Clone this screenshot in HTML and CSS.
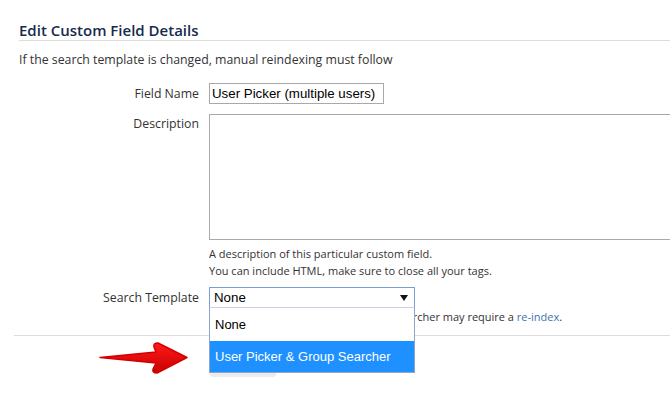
FILE: index.html
```html
<!DOCTYPE html>
<html>
<head>
<meta charset="utf-8">
<link rel="stylesheet" href="styles.css">
</head>
<body>
<div class="page">
  <h2 class="title">Edit Custom Field Details</h2>
  <p class="intro">If the search template is changed, manual reindexing must follow</p>
  <div class="row row-name">
    <label class="label">Field Name</label>
    <div class="field"><div class="input">User Picker (multiple users)</div></div>
  </div>
  <div class="row row-desc">
    <label class="label">Description</label>
    <div class="field">
      <div class="textarea"></div>
      <div class="help">A description of this particular custom field.<br>You can include HTML, make sure to close all your tags.</div>
    </div>
  </div>
  <div class="row row-search">
    <label class="label">Search Template</label>
    <div class="field">
      <div class="select-wrap">
        <div class="select"><span>None</span><svg class="caret" width="8" height="6" viewBox="0 0 8 6"><path d="M0 0H8L4 6Z" fill="#111"/></svg></div>
        <div class="dropdown">
          <div class="opt">None</div>
          <div class="opt opt-active">User Picker &amp; Group Searcher</div>
        </div>
      </div>
      <div class="help">Note that changing the custom field searcher may require a <a href="#">re-index</a>.</div>
    </div>
  </div>
  <div class="sep"></div>
  <div class="buttons"><div class="btn">Update</div></div>
  <svg class="arrow" width="96" height="40" viewBox="0 0 96 40">
    <defs>
      <linearGradient id="g" x1="0" y1="0" x2="0" y2="1">
        <stop offset="0" stop-color="#ff1a1a"/>
        <stop offset="1" stop-color="#c80000"/>
      </linearGradient>
    </defs>
    <path d="M2 19.5 L58 14 L56 9 Q55 5 60 5 L89 19.5 L59 35 Q54 35 55 31 L58 25 Z" fill="url(#g)" stroke="#d40000" stroke-width="1.5" stroke-linejoin="round"/>
  </svg>
</div>
</body>
</html>
```
FILE: styles.css
```css
html, body {
  margin: 0;
  padding: 0;
  background: #fff;
}
body {
  font-family: "Open Sans", "Noto Sans", sans-serif;
  color: #333;
  font-size: 12.3px;
  overflow: hidden;
}
.page {
  position: relative;
  padding: 20px 0 0 19px;
}
.title {
  margin: 0;
  font-size: 15px;
  line-height: 20px;
  font-weight: 600;
  color: #172b4d;
  border-bottom: 1px solid #ddd;
}
.intro {
  margin: 9px 0 0 0;
  line-height: 20px;
}
.row {
  display: flex;
  gap: 10px;
}
.label {
  width: 180px;
  flex: none;
  text-align: right;
  line-height: 21px;
  color: #333;
}
.field {
  flex: 1;
  min-width: 0;
}
.row-name { margin-top: 13px; }
.row-desc { margin-top: 10px; }
.row-desc .label { line-height: 19px; }
.input {
  width: 171px;
  height: 19px;
  border: 1px solid #a9a9a9;
  font-family: "Liberation Sans", Arial, sans-serif;
  font-size: 13.3px;
  line-height: 19px;
  padding-left: 2px;
  color: #000;
  white-space: nowrap;
}
.textarea {
  width: 600px;
  height: 124px;
  border: 1px solid #a9a9a9;
}
.help {
  font-size: 11px;
  line-height: 17px;
  margin-top: 5px;
  white-space: nowrap;
}
.help a {
  color: #3b73af;
  text-decoration: none;
}
.row-search { margin-top: 8px; }
.row-search .help { margin-top: 0; }
.select-wrap {
  position: relative;
  width: 206px;
}
.select {
  height: 19px;
  border: 1px solid #7a9fd6;
  display: flex;
  align-items: center;
  justify-content: space-between;
  padding: 0 6px 0 4px;
  font-family: "Liberation Sans", Arial, sans-serif;
  font-size: 13.3px;
  color: #000;
}
.dropdown {
  position: absolute;
  left: 0;
  top: 20px;
  width: 204px;
  border: 1px solid #8ea6c9;
  border-top: 1px solid #c8d2e0;
  background: #fff;
  font-family: "Liberation Sans", Arial, sans-serif;
  font-size: 13px;
  color: #000;
  z-index: 2;
}
.opt {
  padding-left: 5px;
  height: 33px;
  line-height: 33px;
  white-space: nowrap;
}
.opt-active {
  height: 31px;
  line-height: 31px;
  background: #1e90ff;
  color: #fff;
}
.sep {
  margin: 10px 0 0 -5px;
  border-top: 1px solid #ddd;
}
.buttons {
  margin-top: 11px;
  padding-left: 191px;
}
.btn {
  width: 66px;
  height: 30px;
  border-radius: 3px;
  background: #ebecf0;
  color: #333;
  font-size: 14px;
  line-height: 30px;
  text-align: center;
}
.arrow {
  position: absolute;
  left: 98px;
  top: 338px;
  z-index: 3;
}
```
